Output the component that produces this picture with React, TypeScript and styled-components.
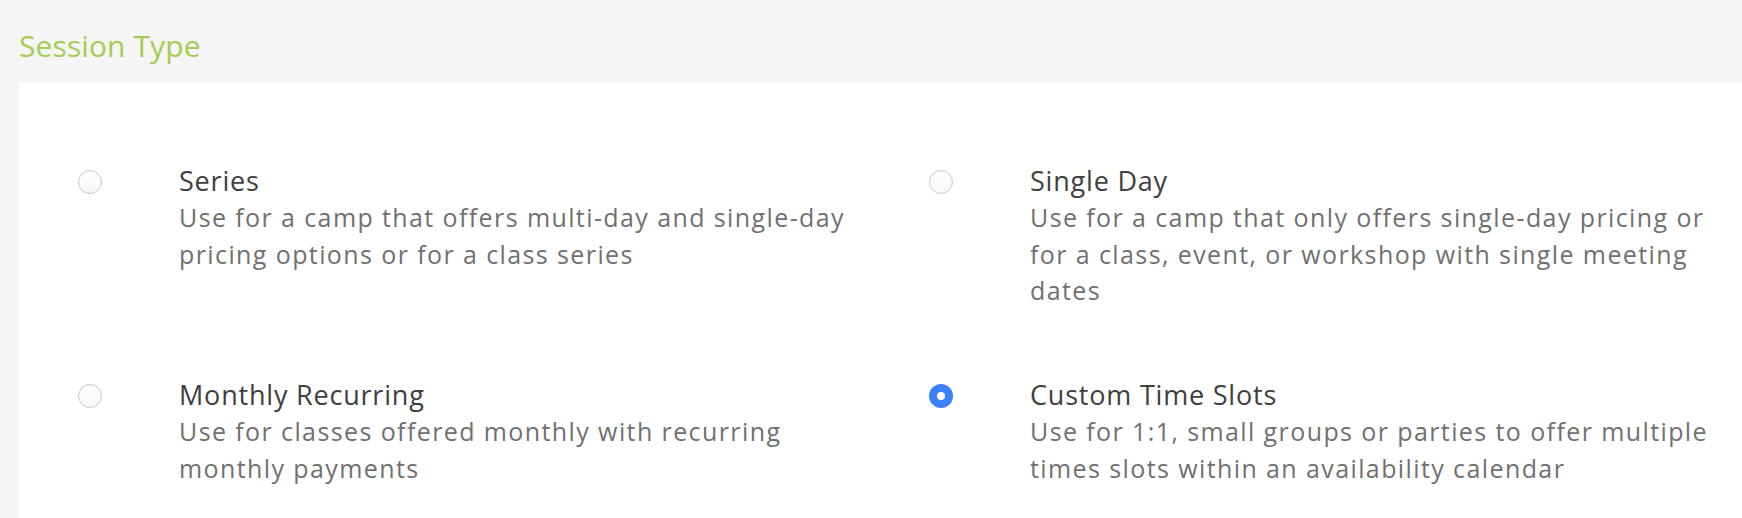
import React, { useState } from "react";
import styled, { createGlobalStyle } from "styled-components";

const Global = createGlobalStyle`
  html, body {
    margin: 0;
    padding: 0;
    background: #f5f5f5;
  }
  body {
    font-family: "Open Sans", "Liberation Sans", sans-serif;
  }
`;

const Page = styled.div`
  min-height: 518px;
  display: flex;
  flex-direction: column;
  background: #f5f5f5;
`;

const Heading = styled.h2`
  margin: 0;
  padding: 26px 0 16px 19px;
  font-size: 30px;
  line-height: 40px;
  font-weight: 500;
  letter-spacing: 0.1px;
  color: #a4cc52;
`;

const Card = styled.section`
  flex: 1;
  margin-left: 19px;
  background: #ffffff;
  padding: 80px 20px 40px 59px;
  display: grid;
  grid-template-columns: 806px 1fr;
  column-gap: 45px;
  row-gap: 67px;
`;

const Option = styled.label`
  display: grid;
  grid-template-columns: 24px 1fr;
  column-gap: 77px;
  align-items: start;
  cursor: pointer;
`;

const Radio = styled.span<{ $checked: boolean }>`
  box-sizing: border-box;
  width: 24px;
  height: 24px;
  margin-top: 8px;
  border-radius: 50%;
  display: flex;
  align-items: center;
  justify-content: center;
  background: ${(p) => (p.$checked ? "#3a82f7" : "linear-gradient(#ffffff, #f7f7f7)")};
  border: ${(p) => (p.$checked ? "none" : "1px solid #c9c9c9")};
  box-shadow: ${(p) => (p.$checked ? "none" : "inset 0 1px 1px rgba(0,0,0,0.04)")};

  &::after {
    content: "";
    display: ${(p) => (p.$checked ? "block" : "none")};
    width: 8px;
    height: 8px;
    border-radius: 50%;
    background: #ffffff;
  }
`;

const HiddenInput = styled.input`
  position: absolute;
  opacity: 0;
  width: 0;
  height: 0;
  margin: 0;
`;

const Text = styled.div`
  display: flex;
  flex-direction: column;
`;

const Label = styled.span`
  font-size: 27px;
  line-height: 37px;
  font-weight: 500;
  letter-spacing: 0.8px;
  color: #404040;
`;

const Desc = styled.span`
  font-size: 25px;
  line-height: 36.7px;
  letter-spacing: 1.4px;
  color: #707070;
`;

const options = [
  {
    id: "series",
    label: "Series",
    desc: "Use for a camp that offers multi-day and single-day pricing options or for a class series",
  },
  {
    id: "single",
    label: "Single Day",
    desc: "Use for a camp that only offers single-day pricing or for a class, event, or workshop with single meeting dates",
  },
  {
    id: "monthly",
    label: "Monthly Recurring",
    desc: "Use for classes offered monthly with recurring monthly payments",
  },
  {
    id: "custom",
    label: "Custom Time Slots",
    desc: "Use for 1:1, small groups or parties to offer multiple times slots within an availability calendar",
  },
];

export default function App() {
  const [value, setValue] = useState("custom");
  return (
    <Page>
      <Global />
      <Heading>Session Type</Heading>
      <Card>
        {options.map((o) => (
          <Option key={o.id}>
            <HiddenInput
              type="radio"
              name="session-type"
              checked={value === o.id}
              onChange={() => setValue(o.id)}
            />
            <Radio $checked={value === o.id} />
            <Text>
              <Label>{o.label}</Label>
              <Desc>{o.desc}</Desc>
            </Text>
          </Option>
        ))}
      </Card>
    </Page>
  );
}
